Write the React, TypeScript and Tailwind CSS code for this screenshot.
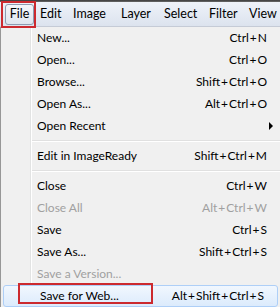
import { Fragment } from 'react';

type Item = { label?: string; keys?: string; disabled?: boolean; sub?: boolean; sep?: boolean; active?: boolean };

const items: Item[] = [
  { label: 'New...', keys: 'Ctrl+N' },
  { label: 'Open...', keys: 'Ctrl+O' },
  { label: 'Browse...', keys: 'Shift+Ctrl+O' },
  { label: 'Open As...', keys: 'Alt+Ctrl+O' },
  { label: 'Open Recent', sub: true },
  { sep: true },
  { label: 'Edit in ImageReady', keys: 'Shift+Ctrl+M' },
  { sep: true },
  { label: 'Close', keys: 'Ctrl+W' },
  { label: 'Close All', keys: 'Alt+Ctrl+W', disabled: true },
  { label: 'Save', keys: 'Ctrl+S' },
  { label: 'Save As...', keys: 'Shift+Ctrl+S' },
  { label: 'Save a Version...', disabled: true },
  { label: 'Save for Web...', keys: 'Alt+Shift+Ctrl+S', active: true },
];

// largura de cada item da barra (do início do texto ao próximo)
const menus = [
  { name: 'Edit', w: 'w-[33px]' },
  { name: 'Image', w: 'w-[48px]' },
  { name: 'Layer', w: 'w-[43px]' },
  { name: 'Select', w: 'w-[45px]' },
  { name: 'Filter', w: 'w-[40px]' },
  { name: 'View', w: 'w-auto' },
];

// atalho com o "+" um pouco mais espaçado, como no Windows
const Keys = ({ text }: { text: string }) => (
  <span className="ml-auto">
    {text.split('+').map((k, i) => (
      <Fragment key={i}>
        {i > 0 && <span className="mx-[1px]">+</span>}
        {k}
      </Fragment>
    ))}
  </span>
);

export default function App() {
  return (
    <div className="relative w-[280px] h-[307px] overflow-hidden bg-[#f0f0f0] text-[12px] text-black font-['Lato',sans-serif]">
      {/* barra escura do topo */}
      <div className="h-[2px] bg-gradient-to-b from-[#3a3a3a] to-[#6b6b6b]" />

      {/* barra de menus */}
      <div className="flex items-center h-[25px] pl-[5px] text-[12.5px] bg-gradient-to-b from-[#eef2f9] to-[#dce3ee] border-b border-[#c5cbd6]">
        <div className="shrink-0 w-[29px] h-[21px] flex items-center justify-center rounded-[3px] border border-[#8e9bb0] bg-gradient-to-b from-[#f4f6fa] to-[#dfe5ee]">
          File
        </div>
        <div className="flex shrink-0 ml-[6px]">
          {menus.map((m) => (
            <span key={m.name} className={`${m.w} shrink-0`}>
              {m.name}
            </span>
          ))}
        </div>
      </div>

      {/* menu suspenso */}
      <div className="relative border-l border-[#979797]">
        <div className="absolute left-[29px] top-0 bottom-0 w-[2px] border-l border-[#e2e3e3] bg-white" />
        {items.map((it, i) =>
          it.sep ? (
            <div key={i} className="h-[8px] flex items-center pl-[31px]">
              <div className="h-[2px] w-full border-t border-[#e0e0e0] bg-white" />
            </div>
          ) : (
            <div
              key={i}
              className={`relative h-[22px] flex items-center pl-[36px] pr-[13px] ${
                it.disabled ? 'text-[#a0a0a0]' : ''
              } ${
                it.active
                  ? 'mx-[2px] pl-[34px] pr-[11px] rounded-[3px] border border-[#aecff7] bg-gradient-to-b from-[#f1f7fe] to-[#dcebfc]'
                  : ''
              }`}
            >
              <span>{it.label}</span>
              {it.keys && <Keys text={it.keys} />}
              {it.sub && (
                <span className="ml-auto -mr-[6px] w-0 h-0 border-y-[4px] border-y-transparent border-l-[4px] border-l-black" />
              )}
            </div>
          )
        )}
      </div>

      {/* destaques em vermelho */}
      <div className="absolute left-[1px] top-[1px] w-[35px] h-[27px] border-2 border-[#cc2a2f]" />
      <div className="absolute left-[18px] top-[283px] w-[135px] h-[21px] border-2 border-[#cc2a2f]" />
    </div>
  );
}
